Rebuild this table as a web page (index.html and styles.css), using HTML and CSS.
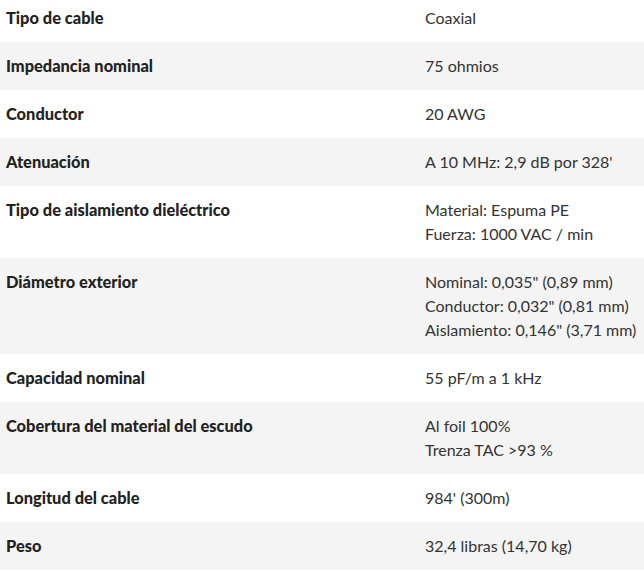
FILE: index.html
```html
<!DOCTYPE html>
<html lang="es">
<head>
<meta charset="utf-8">
<title>Especificaciones</title>
<link rel="stylesheet" href="styles.css">
</head>
<body>
<table class="specs">
  <tbody>
    <tr><th>Tipo de cable</th><td>Coaxial</td></tr>
    <tr><th>Impedancia nominal</th><td>75 ohmios</td></tr>
    <tr><th>Conductor</th><td>20 AWG</td></tr>
    <tr><th>Atenuación</th><td>A 10 MHz: 2,9 dB por 328'</td></tr>
    <tr><th>Tipo de aislamiento dieléctrico</th><td>Material: Espuma PE<br>Fuerza: 1000 VAC / min</td></tr>
    <tr><th>Diámetro exterior</th><td>Nominal: 0,035" (0,89 mm)<br>Conductor: 0,032" (0,81 mm)<br>Aislamiento: 0,146" (3,71 mm)</td></tr>
    <tr><th>Capacidad nominal</th><td>55 pF/m a 1 kHz</td></tr>
    <tr><th>Cobertura del material del escudo</th><td>Al foil 100%<br>Trenza TAC &gt;93 %</td></tr>
    <tr><th>Longitud del cable</th><td>984' (300m)</td></tr>
    <tr><th>Peso</th><td>32,4 libras (14,70 kg)</td></tr>
  </tbody>
</table>
</body>
</html>
```
FILE: styles.css
```css
html, body {
  margin: 0;
  padding: 0;
  background: #ffffff;
}
body {
  font-family: Lato, "Liberation Sans", sans-serif;
  font-size: 16px;
  line-height: 24px;
  color: #333333;
}
.specs {
  width: 644px;
  border-collapse: collapse;
  margin-top: -6px;
}
.specs tr:nth-child(even) {
  background: #f4f4f4;
}
.specs th,
.specs td {
  padding: 12px 6px;
  vertical-align: top;
  text-align: left;
}
.specs th {
  width: 407px;
  font-size: 16.4px;
  font-weight: 900;
  color: #222222;
}
.specs td {
  font-weight: 400;
  color: #333333;
}
```
